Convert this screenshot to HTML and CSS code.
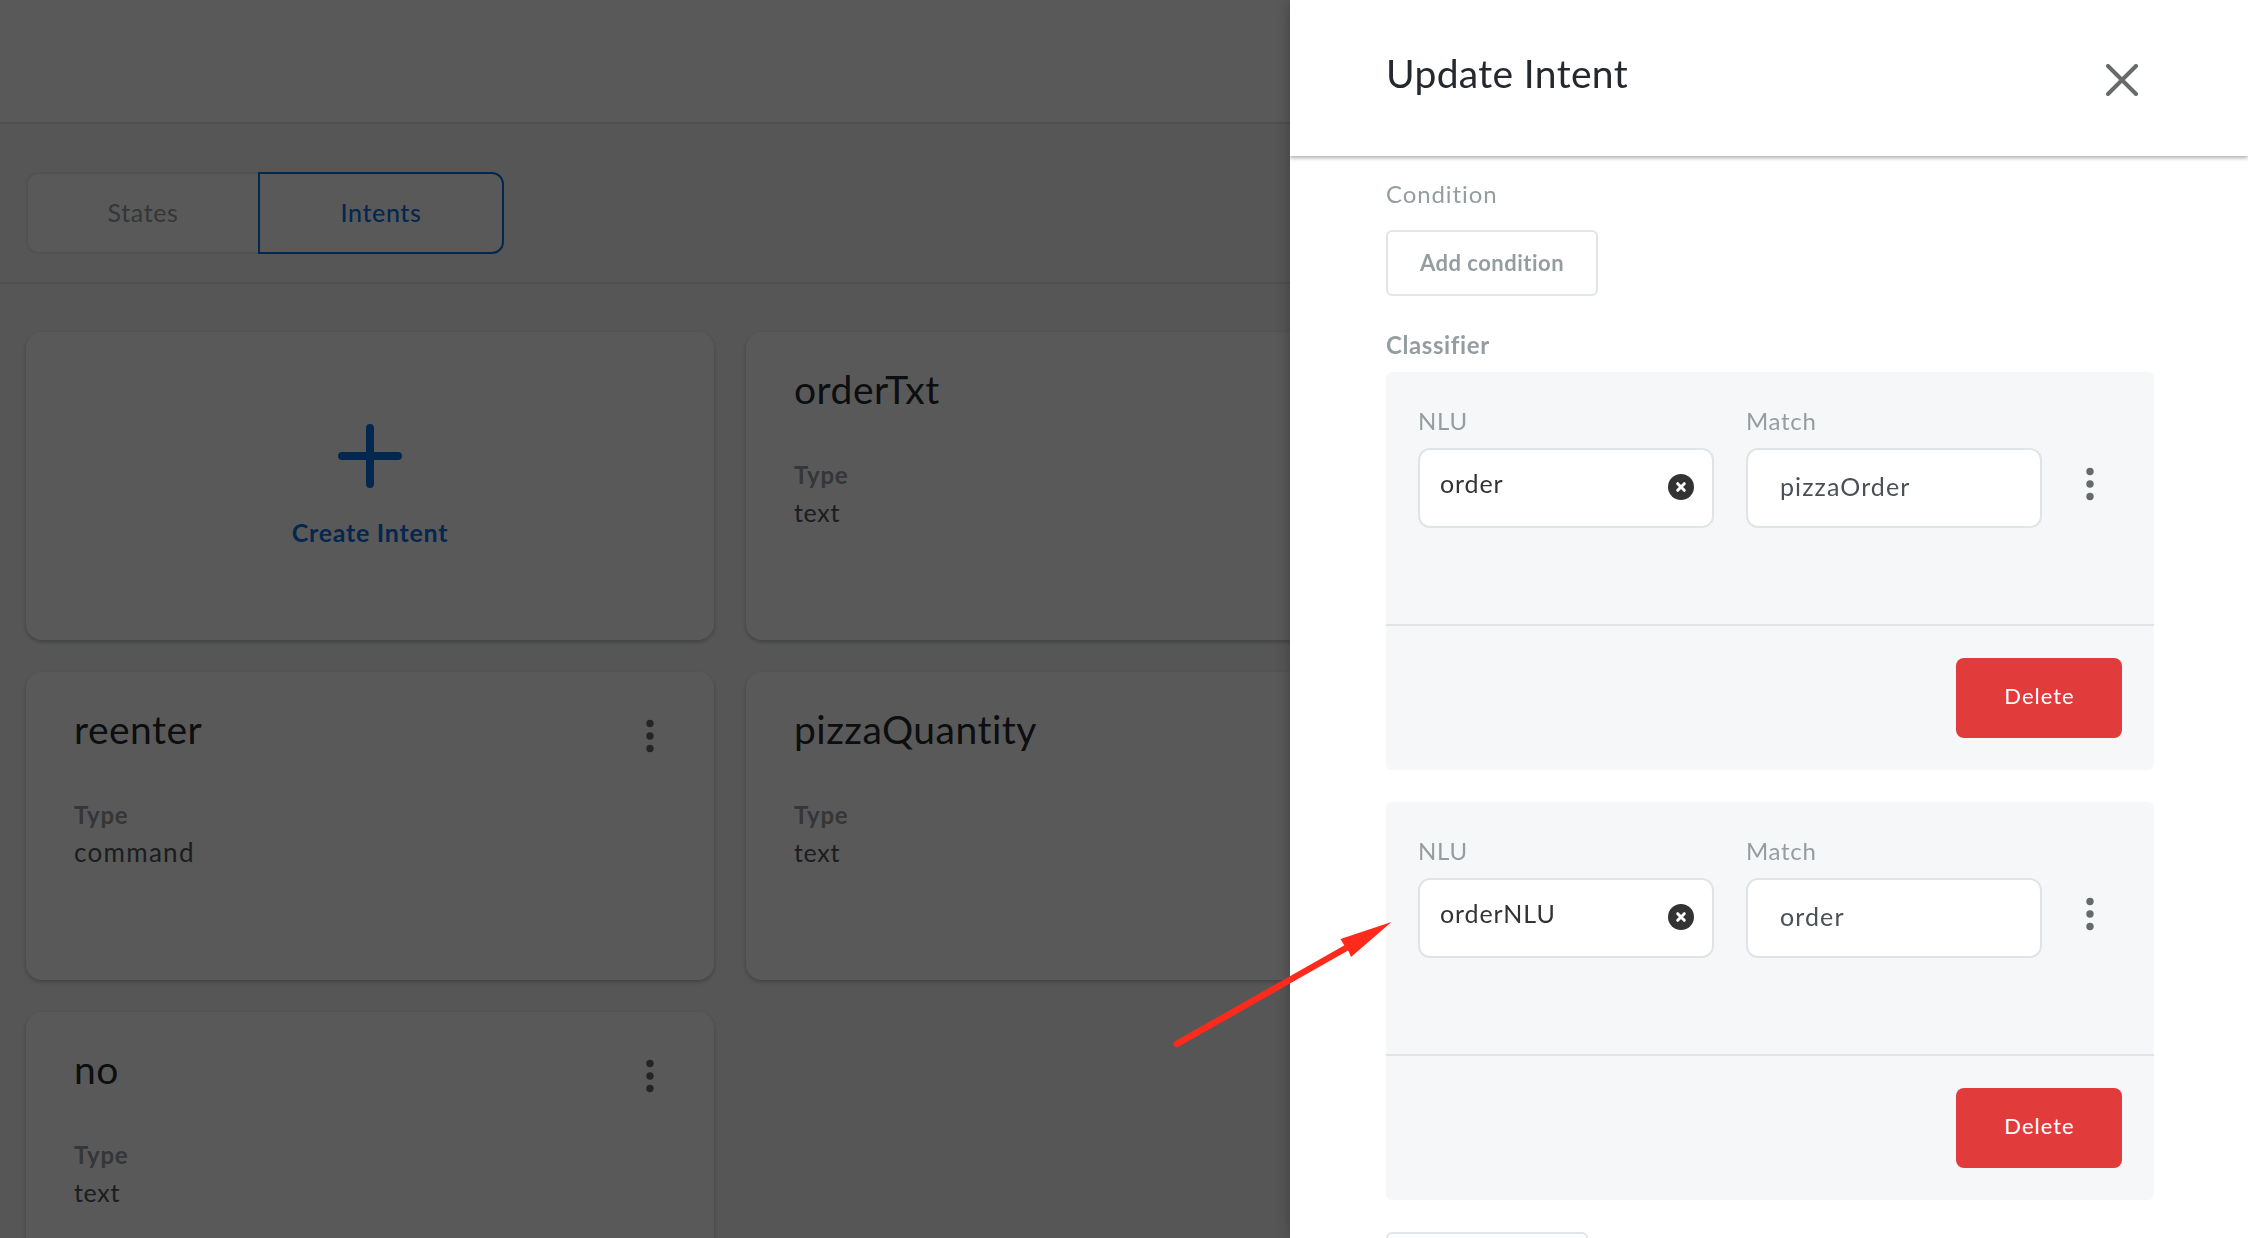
FILE: index.html
```
<!DOCTYPE html>
<html lang="en">
<head>
  <meta charset="utf-8">
  <title>Update Intent</title>
  <link rel="stylesheet" href="styles.css">
</head>
<body>
  <svg class="sprite" aria-hidden="true">
    <symbol id="kebab" viewBox="0 0 8 34">
      <circle cx="4" cy="4.5" r="3.7"/><circle cx="4" cy="17" r="3.7"/><circle cx="4" cy="29.5" r="3.7"/>
    </symbol>
    <symbol id="clear" viewBox="0 0 26 26">
      <circle cx="13" cy="13" r="13" fill="#333"/>
      <path d="M9.7 9.7l6.6 6.6M16.3 9.7l-6.6 6.6" stroke="#fff" stroke-width="3" stroke-linecap="round"/>
    </symbol>
  </svg>

  <div class="app">
    <header class="topbar"></header>
    <nav class="toolbar">
      <div class="tabs">
        <div class="tab tab-first">States</div>
        <div class="tab tab-active">Intents</div>
      </div>
    </nav>
    <main class="grid">
      <section class="card card-create">
        <svg class="plus" viewBox="0 0 64 64"><path d="M32 4v56M4 32h56"/></svg>
        <div class="create-label">Create Intent</div>
      </section>
      <section class="card">
        <div class="card-head"><h2 class="card-title">orderTxt</h2><svg class="kebab"><use href="#kebab"/></svg></div>
        <div class="type">Type</div>
        <div class="value">text</div>
      </section>
      <section class="card"></section>
      <section class="card">
        <div class="card-head"><h2 class="card-title">reenter</h2><svg class="kebab"><use href="#kebab"/></svg></div>
        <div class="type">Type</div>
        <div class="value value-wide">command</div>
      </section>
      <section class="card">
        <div class="card-head"><h2 class="card-title">pizzaQuantity</h2><svg class="kebab"><use href="#kebab"/></svg></div>
        <div class="type">Type</div>
        <div class="value">text</div>
      </section>
      <section class="card"></section>
      <section class="card">
        <div class="card-head"><h2 class="card-title">no</h2><svg class="kebab"><use href="#kebab"/></svg></div>
        <div class="type">Type</div>
        <div class="value">text</div>
      </section>
    </main>
  </div>

  <div class="overlay"></div>

  <aside class="drawer">
    <header class="drawer-head">
      <h1 class="drawer-title">Update Intent</h1>
      <svg class="close" viewBox="0 0 32 32"><path d="M2 2l28 28M30 2L2 30"/></svg>
    </header>
    <div class="drawer-body">
      <div class="label">Condition</div>
      <div class="btn-outline btn-condition">Add condition</div>
      <div class="label label-strong">Classifier</div>

      <section class="classifier">
        <div class="fields">
          <div class="field">
            <div class="label field-label">NLU</div>
            <div class="input input-select"><span>order</span><svg class="clear"><use href="#clear"/></svg></div>
          </div>
          <div class="field">
            <div class="label field-label">Match</div>
            <div class="input input-text">pizzaOrder</div>
          </div>
          <svg class="kebab kebab-field"><use href="#kebab"/></svg>
        </div>
        <div class="actions"><div class="btn-delete">Delete</div></div>
      </section>

      <section class="classifier">
        <div class="fields">
          <div class="field">
            <div class="label field-label">NLU</div>
            <div class="input input-select"><span>orderNLU</span><svg class="clear"><use href="#clear"/></svg></div>
          </div>
          <div class="field">
            <div class="label field-label">Match</div>
            <div class="input input-text">order</div>
          </div>
          <svg class="kebab kebab-field"><use href="#kebab"/></svg>
        </div>
        <div class="actions"><div class="btn-delete">Delete</div></div>
      </section>

      <div class="btn-outline btn-add"></div>
    </div>
  </aside>

  <svg class="arrow" viewBox="0 0 224 132">
    <path d="M6.700 124L177 27.500" stroke="#ff2a1c" stroke-width="6.400" stroke-linecap="round"/>
    <path d="M221.500 2L170.500 19L174 25L179 32L181 37Z" fill="#ff2a1c"/>
  </svg>
</body>
</html>
```
FILE: styles.css
```
* { box-sizing: border-box; }

body {
  margin: 0;
  height: 1238px;
  overflow: hidden;
  font-family: Lato, "Open Sans", sans-serif;
  font-size: 24px;
  color: #24292f;
  background: #f6f7f8;
}

h1, h2 { margin: 0; font-weight: 400; }
svg { display: block; flex: none; }
.sprite { display: none; }

/* page behind the drawer */
.app { height: 1238px; overflow: hidden; }
.topbar { height: 124px; background: #fff; border-bottom: 2px solid #e3e5e7; }
.toolbar { height: 160px; padding: 48px 26px 0; border-bottom: 2px solid #e3e5e7; }
.tabs { display: flex; height: 82px; }
.tab {
  display: flex;
  align-items: center;
  justify-content: center;
  padding-bottom: 3px;
  background: #fff;
  font-size: 25px;
  letter-spacing: .6px;
}
.tab-first {
  width: 232px;
  border: 2px solid #e6e8eb;
  border-right: 0;
  border-radius: 12px 0 0 12px;
  color: #959b9e;
}
.tab-active {
  width: 246px;
  border: 2px solid #0e6fe2;
  border-radius: 0 12px 12px 0;
  color: #0e6fe2;
  font-weight: 500;
}

.grid {
  display: grid;
  grid-template-columns: repeat(3, 688px);
  grid-auto-rows: 308px;
  gap: 32px;
  padding: 48px 26px 0;
}
.card {
  padding: 33px 60px 0 48px;
  background: #fff;
  border-radius: 16px;
  box-shadow: 0 2px 4px rgba(0, 0, 0, .25);
}
.card-create { display: flex; flex-direction: column; align-items: center; padding: 92px 0 0; }
.plus { width: 64px; height: 64px; stroke: #0e6fe2; stroke-width: 8; stroke-linecap: round; }
.create-label {
  margin-top: 28px;
  line-height: 32px;
  font-size: 25px;
  font-weight: 700;
  letter-spacing: .75px;
  color: #0e6fe2;
}
.card-head { display: flex; justify-content: space-between; }
.card-title { font-size: 39px; line-height: 48px; letter-spacing: .5px; }
.kebab { width: 8px; height: 34px; fill: #666a6d; }
.card .kebab { margin-top: 14px; }
.type { margin-top: 46px; line-height: 32px; font-weight: 700; letter-spacing: .7px; color: #959b9e; }
.value { margin-top: 2px; font-size: 25px; line-height: 38px; letter-spacing: .7px; color: #505458; }
.value-wide { font-size: 26px; letter-spacing: 1.3px; }

.overlay { position: fixed; inset: 0; background: rgba(0, 0, 0, .65); }

/* drawer */
.drawer {
  position: fixed;
  top: 0;
  right: 0;
  width: 958px;
  height: 1238px;
  overflow: hidden;
  background: #fff;
  box-shadow: 0 0 16px rgba(0, 0, 0, .3);
}
.drawer-head {
  display: flex;
  justify-content: space-between;
  height: 156px;
  padding: 49px 110px 0 96px;
  box-shadow: 0 2px 4px rgba(0, 0, 0, .32);
}
.drawer-title { font-size: 39px; line-height: 48px; letter-spacing: .35px; }
.close { width: 32px; height: 32px; margin-top: 15px; stroke: #666a6d; stroke-width: 4; stroke-linecap: round; }

.drawer-body { padding: 22px 94px 0 96px; }
.label { line-height: 32px; letter-spacing: .9px; color: #959da1; }
.label-strong { margin: 33px 0 11px; font-weight: 700; letter-spacing: .6px; }

.btn-outline {
  display: flex;
  align-items: center;
  justify-content: center;
  height: 66px;
  border: 2px solid #e1e5e8;
  border-radius: 6px;
  font-size: 22px;
  font-weight: 700;
  letter-spacing: .5px;
  color: #959da1;
}
.btn-condition { width: 212px; margin-top: 20px; padding-bottom: 2px; }
.btn-add { width: 202px; }

.classifier { height: 398px; margin-bottom: 32px; background: #f5f7f9; border-radius: 6px; }
.fields { display: flex; gap: 32px; height: 252px; padding: 33px 32px 0; }
.field { width: 296px; }
.field-label { margin-bottom: 11px; letter-spacing: .7px; }
.input {
  display: flex;
  align-items: center;
  height: 80px;
  border: 2px solid #e1e4e7;
  border-radius: 12px;
  background: #fff;
  font-size: 25px;
  letter-spacing: .9px;
}
.input-select { justify-content: space-between; padding: 0 18px 0 20px; color: #333; }
.input-select span { padding-bottom: 11px; }
.clear { width: 26px; height: 26px; margin-bottom: 2px; }
.input-text { padding: 0 31px 4px 32px; letter-spacing: 1.1px; color: #495057; }
.kebab-field { margin: 62px 0 0 12px; }

.actions { display: flex; justify-content: flex-end; padding: 32px; border-top: 2px solid #e1e4e7; }
.btn-delete {
  display: flex;
  align-items: center;
  justify-content: center;
  width: 166px;
  height: 80px;
  padding: 0 0 6px 1px;
  border-radius: 8px;
  background: #e23b3b;
  color: #fff;
  font-size: 22px;
  letter-spacing: 1px;
}

/* pointer annotation lying over the page and the drawer */
.arrow { position: fixed; left: 1170px; top: 920px; width: 224px; height: 132px; }
```
